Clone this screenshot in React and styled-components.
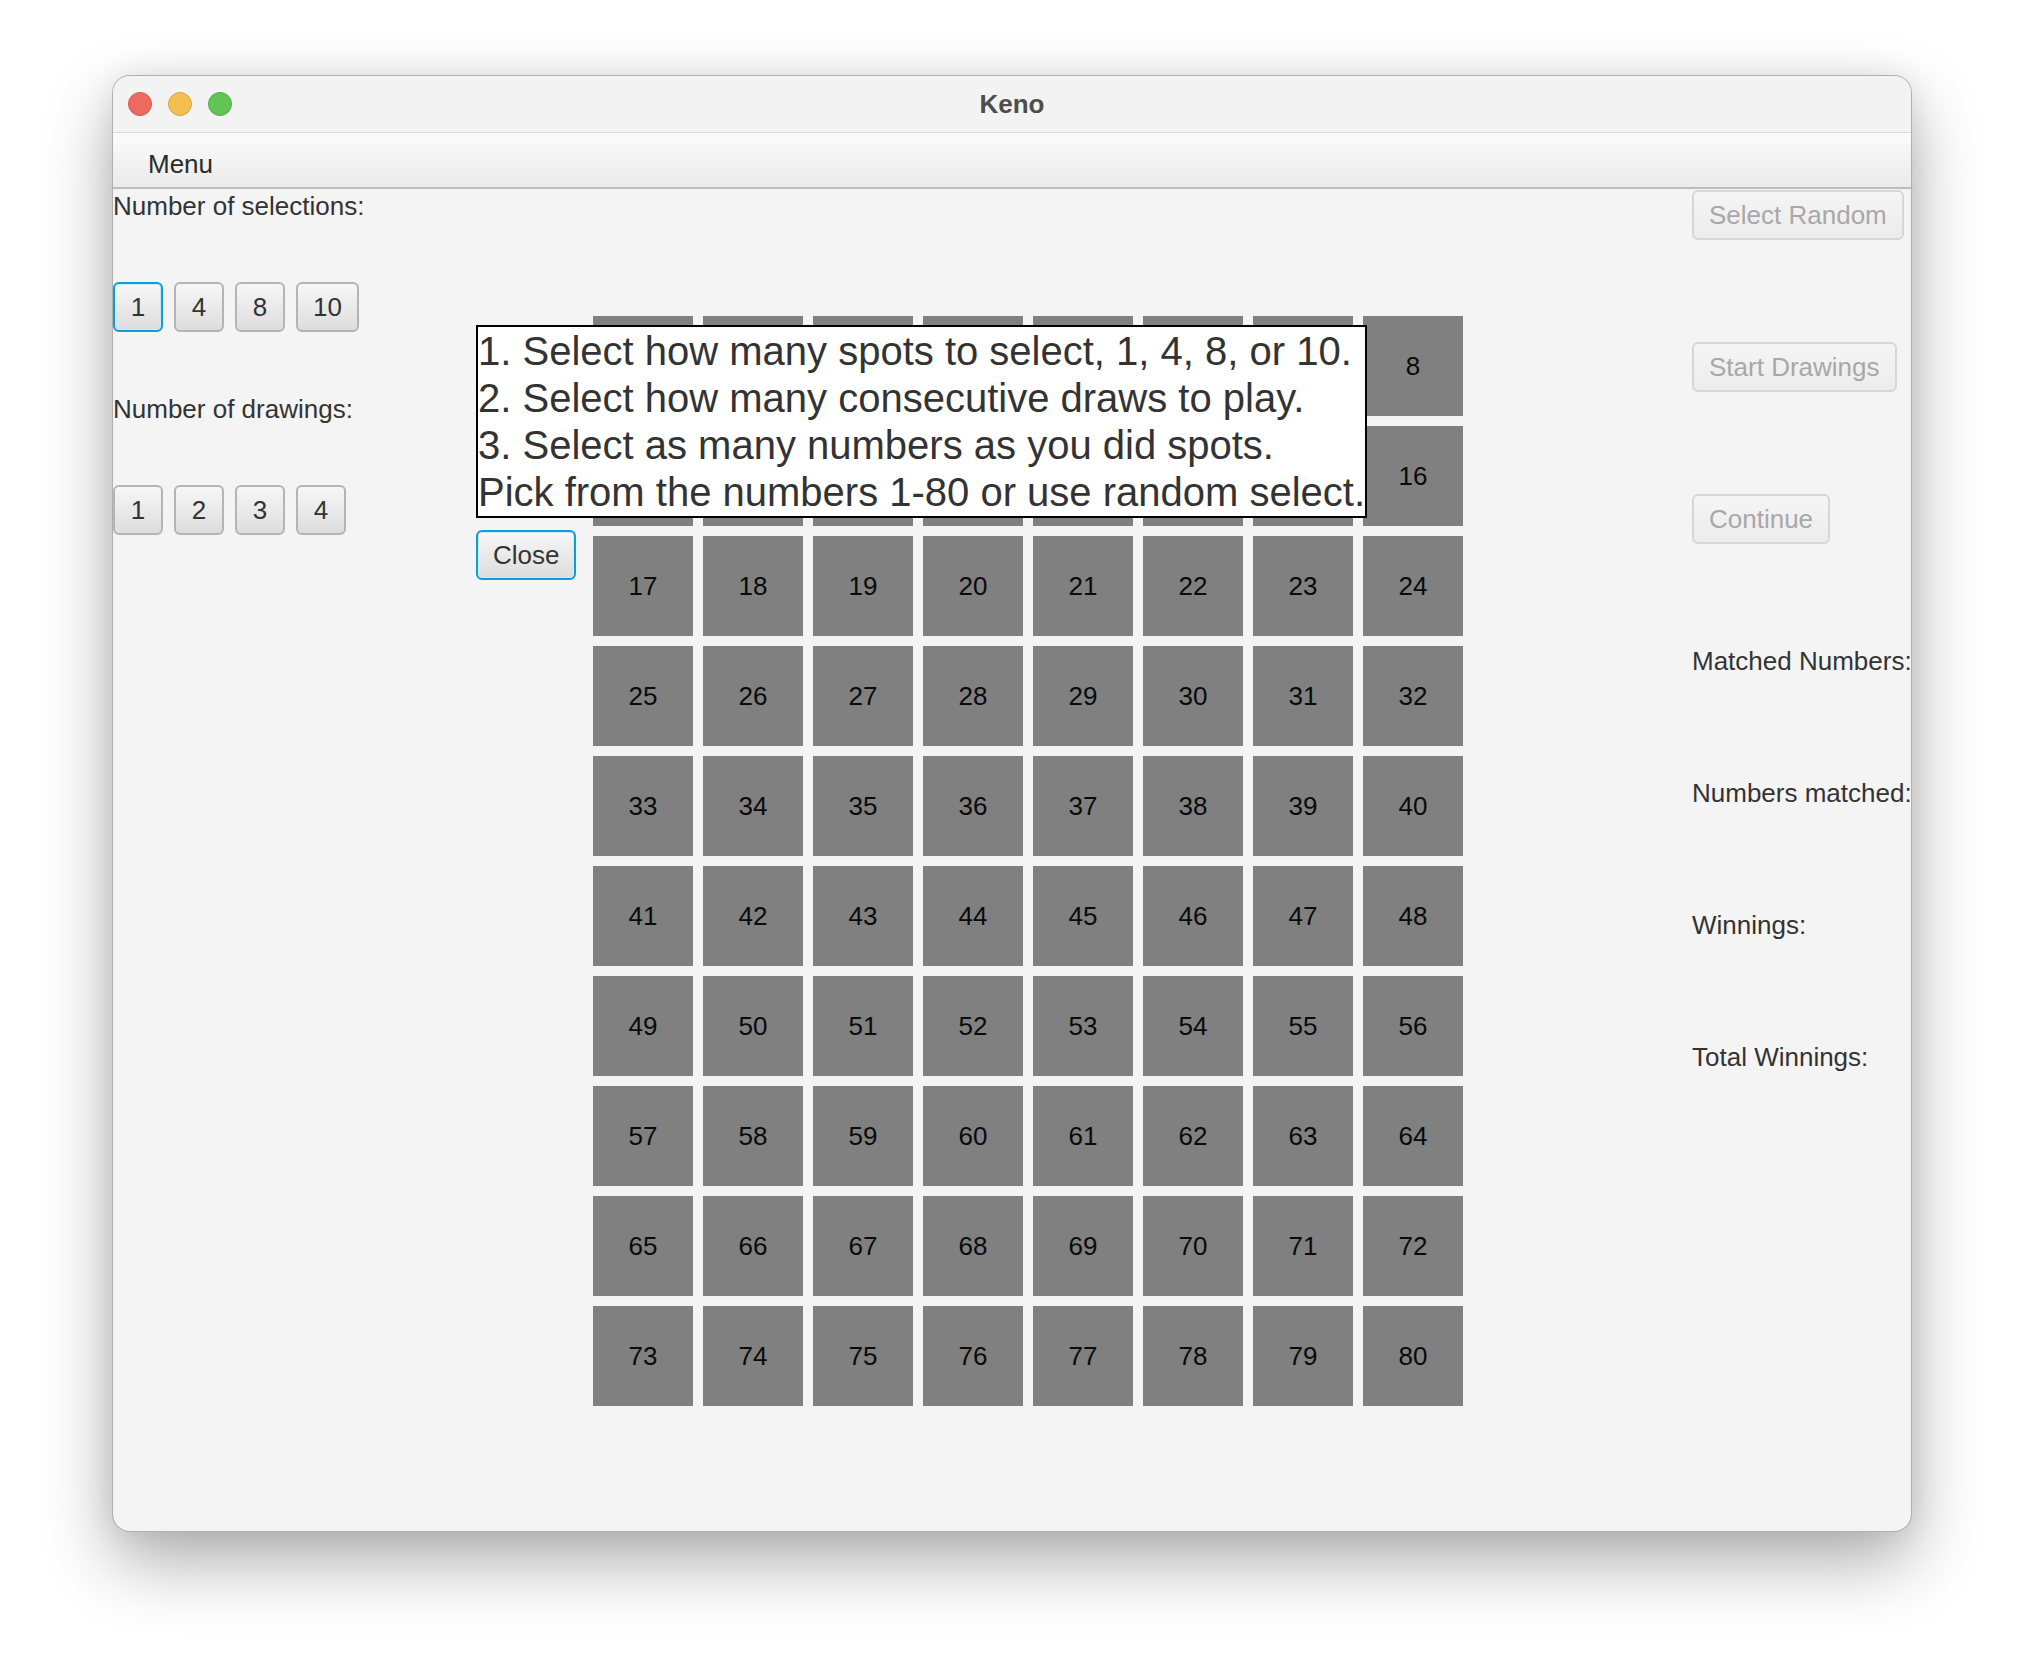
import React from 'react';
import styled, { createGlobalStyle, css } from 'styled-components';

const GlobalStyle = createGlobalStyle`
    html, body {
        margin: 0;
        padding: 0;
        background: #ffffff;
    }
    * {
        box-sizing: border-box;
    }
`;

const Desktop = styled.div`
    width: 2024px;
    height: 1680px;
    padding: 75px 0 0 112px;
    font-family: "Liberation Sans", Arial, sans-serif;
    overflow: hidden;
`;

const Window = styled.div`
    position: relative;
    width: 1800px;
    height: 1457px;
    border: 1px solid rgba(0, 0, 0, 0.28);
    border-radius: 18px;
    background: #f4f4f4;
    overflow: hidden;
    box-shadow: 0 30px 70px rgba(0, 0, 0, 0.32), 0 0 30px rgba(0, 0, 0, 0.08);
    display: flex;
    flex-direction: column;
`;

const TitleBar = styled.div`
    position: relative;
    height: 57px;
    flex: none;
    background: #f3f3f3;
    border-bottom: 1px solid #d9d9d9;
    display: flex;
    align-items: center;
    justify-content: center;
`;

const Lights = styled.div`
    position: absolute;
    left: 15px;
    top: 16px;
    display: flex;
    gap: 16px;
`;

const Light = styled.span`
    width: 24px;
    height: 24px;
    border-radius: 50%;
    background: ${p => p.fill};
    border: 1px solid ${p => p.edge};
`;

const Title = styled.div`
    font-size: 26px;
    font-weight: bold;
    color: #4d4d4d;
    line-height: 57px;
`;

const MenuBar = styled.div`
    flex: none;
    height: 56px;
    padding: 16px 0 0 35px;
    background: linear-gradient(#fbfbfb, #ebebeb);
    border-bottom: 2px solid #bcbcbc;
    font-size: 26px;
    line-height: 30px;
    color: #2b2b2b;
`;

const Body = styled.div`
    position: relative;
    flex: 1;
    display: flex;
    align-items: flex-start;
`;

const LeftColumn = styled.div`
    width: 480px;
    flex: none;
    display: flex;
    flex-direction: column;
    align-items: flex-start;
    padding-top: 2px;
`;

const Label = styled.div`
    font-size: 26px;
    line-height: 30px;
    color: #333333;
    white-space: nowrap;
    margin-bottom: ${p => p.after || 0}px;
`;

const ButtonRow = styled.div`
    display: flex;
    gap: 11px;
    margin-bottom: ${p => p.after || 0}px;
`;

const Button = styled.button`
    height: 50px;
    min-width: 50px;
    padding: 0 15px;
    font-family: "Liberation Sans", Arial, sans-serif;
    font-size: 26px;
    color: #333333;
    background: linear-gradient(#f7f7f7, #dddddd);
    border: 2px solid #b4b4b4;
    border-radius: 6px;
    white-space: nowrap;
    ${p => p.focused && css`
        border-color: #0a9fd8;
        box-shadow: inset 0 0 0 1px #cde9f5;
    `}
    ${p => p.disabled && css`
        color: #a8a8a8;
        background: linear-gradient(#f5f5f5, #ececec);
        border-color: #d6d6d6;
    `}
`;

const Board = styled.div`
    margin-top: 127px;
    display: grid;
    grid-template-columns: repeat(8, 100px);
    grid-auto-rows: 100px;
    gap: 10px;
`;

const Cell = styled.div`
    background: #808080;
    display: flex;
    align-items: center;
    justify-content: center;
    font-size: 26px;
    color: #0a0a0a;
`;

const RightColumn = styled.div`
    margin-left: auto;
    width: 219px;
    flex: none;
    padding-top: 1px;
    display: flex;
    flex-direction: column;
    align-items: flex-start;
    gap: 102px;
`;

const Popup = styled.div`
    position: absolute;
    left: 363px;
    top: 136px;
    display: flex;
    flex-direction: column;
    align-items: flex-start;
    gap: 12px;
`;

const Instructions = styled.div`
    background: #ffffff;
    border: 2px solid #000000;
    padding-top: 1px;
    font-size: 40px;
    line-height: 47px;
    color: #333333;
    white-space: pre;
`;

const lines = [
    '1. Select how many spots to select, 1, 4, 8, or 10.',
    '2. Select how many consecutive draws to play.',
    '3. Select as many numbers as you did spots.',
    'Pick from the numbers 1-80 or use random select.',
];

export default function App() {
    const numbers = Array.from({ length: 80 }, (_, i) => i + 1);
    return (
        <>
            <GlobalStyle />
            <Desktop>
                <Window>
                    <TitleBar>
                        <Lights>
                            <Light fill="#ed6a5e" edge="#d4564b" />
                            <Light fill="#f5bf4f" edge="#d9a23f" />
                            <Light fill="#61c454" edge="#4ea843" />
                        </Lights>
                        <Title>Keno</Title>
                    </TitleBar>
                    <MenuBar>Menu</MenuBar>
                    <Body>
                        <LeftColumn>
                            <Label after={61}>Number of selections:</Label>
                            <ButtonRow after={62}>
                                <Button focused>1</Button>
                                <Button>4</Button>
                                <Button>8</Button>
                                <Button>10</Button>
                            </ButtonRow>
                            <Label after={61}>Number of drawings:</Label>
                            <ButtonRow>
                                <Button>1</Button>
                                <Button>2</Button>
                                <Button>3</Button>
                                <Button>4</Button>
                            </ButtonRow>
                        </LeftColumn>
                        <Board>
                            {numbers.map(n => (
                                <Cell key={n}>{n}</Cell>
                            ))}
                        </Board>
                        <RightColumn>
                            <Button disabled>Select Random</Button>
                            <Button disabled>Start Drawings</Button>
                            <Button disabled>Continue</Button>
                            <Label>Matched Numbers:</Label>
                            <Label>Numbers matched:</Label>
                            <Label>Winnings:</Label>
                            <Label>Total Winnings:</Label>
                        </RightColumn>
                        <Popup>
                            <Instructions>{lines.join('\n')}</Instructions>
                            <Button focused>Close</Button>
                        </Popup>
                    </Body>
                </Window>
            </Desktop>
        </>
    );
}
